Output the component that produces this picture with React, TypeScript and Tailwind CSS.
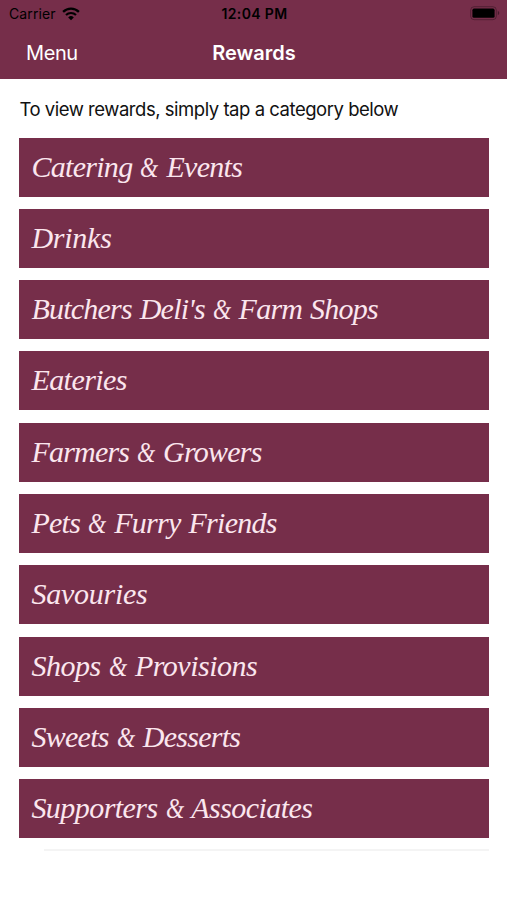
const categories = [
  { name: 'Catering & Events', tracking: 'tracking-[-0.7px]' },
  { name: 'Drinks', tracking: 'tracking-[-0.25px]' },
  { name: "Butchers Deli's & Farm Shops", tracking: 'tracking-[-0.78px]' },
  { name: 'Eateries', tracking: 'tracking-[-0.55px]' },
  { name: 'Farmers & Growers', tracking: 'tracking-[-0.78px]' },
  { name: 'Pets & Furry Friends', tracking: 'tracking-[-0.72px]' },
  { name: 'Savouries', tracking: 'tracking-[-0.25px]' },
  { name: 'Shops & Provisions', tracking: 'tracking-[-0.5px]' },
  { name: 'Sweets & Desserts', tracking: 'tracking-[-0.72px]' },
  { name: 'Supporters & Associates', tracking: 'tracking-[-0.55px]' },
];

function WifiIcon() {
  return (
    <svg className="w-[18px] h-[14px]" viewBox="0 0 18 14" fill="none">
      <path d="M1.1 4.9a11.4 11.4 0 0 1 15.8 0" stroke="black" strokeWidth="2.3" />
      <path d="M4 8a7.2 7.2 0 0 1 10 0" stroke="black" strokeWidth="2.2" />
      <path d="M9 13.2 6.2 10.4a4 4 0 0 1 5.6 0Z" fill="black" />
    </svg>
  );
}

function BatteryIcon() {
  return (
    <svg className="w-[30px] h-[15px]" viewBox="0 0 30 15" fill="none">
      <rect x="0.7" y="0.7" width="25.6" height="13" rx="3.4" stroke="black" strokeOpacity="0.3" />
      <rect x="2.4" y="2.6" width="22.2" height="9.2" rx="1.6" fill="black" />
      <path d="M27.8 4.8c2 .8 2 3.6 0 4.4z" fill="black" fillOpacity="0.4" />
    </svg>
  );
}

function CategoryName({ name }: { name: string }) {
  const [first, second] = name.split('&');
  return (
    <>
      {first}
      {second && (
        <>
          <span className="inline-block w-[18px] origin-left scale-x-[0.78]">&amp;</span>
          {second}
        </>
      )}
    </>
  );
}

export default function App() {
  return (
    <div className="w-full h-[900px] overflow-hidden bg-white font-['Inter','Liberation_Sans',sans-serif]">
      <header className="h-[79px] bg-[#762e4a]">
        <div className="grid h-[27px] grid-cols-3 items-center pl-[9px] pr-[7px] text-black">
          <div className="flex items-center gap-[6px]">
            <span className="text-[14px] leading-none tracking-[0.1px]">Carrier</span>
            <WifiIcon />
          </div>
          <span className="text-center text-[14px] font-semibold leading-none tracking-[0.35px]">12:04 PM</span>
          <div className="flex justify-end">
            <BatteryIcon />
          </div>
        </div>
        <nav className="grid h-[51px] grid-cols-3 items-center px-[26px] text-white">
          <button className="text-left text-[20px] leading-none tracking-[-0.4px]">Menu</button>
          <h1 className="pl-px text-center text-[20px] font-semibold leading-none">Rewards</h1>
        </nav>
      </header>

      <main className="pl-[19.4px] pr-[18.4px] pt-[19px]">
        <p className="h-[39.6px] text-[18.5px] leading-[22px] tracking-[-0.47px] text-[#111111]">
          To view rewards, simply tap a category below
        </p>
        <ul className="flex flex-col gap-[12.3px]">
          {categories.map((category) => (
            <li
              key={category.name}
              className="h-[59px] bg-[#762e4a] pl-[12px] font-['Liberation_Serif',serif] text-[30px] italic leading-[58px] text-[#fbe6ee]"
            >
              <span className={`whitespace-nowrap [word-spacing:1.2px] ${category.tracking}`}>
                <CategoryName name={category.name} />
              </span>
            </li>
          ))}
        </ul>
        <div className="ml-[25px] mt-[10.5px] h-[2px] bg-[#f4f4f4]" />
      </main>
    </div>
  );
}
